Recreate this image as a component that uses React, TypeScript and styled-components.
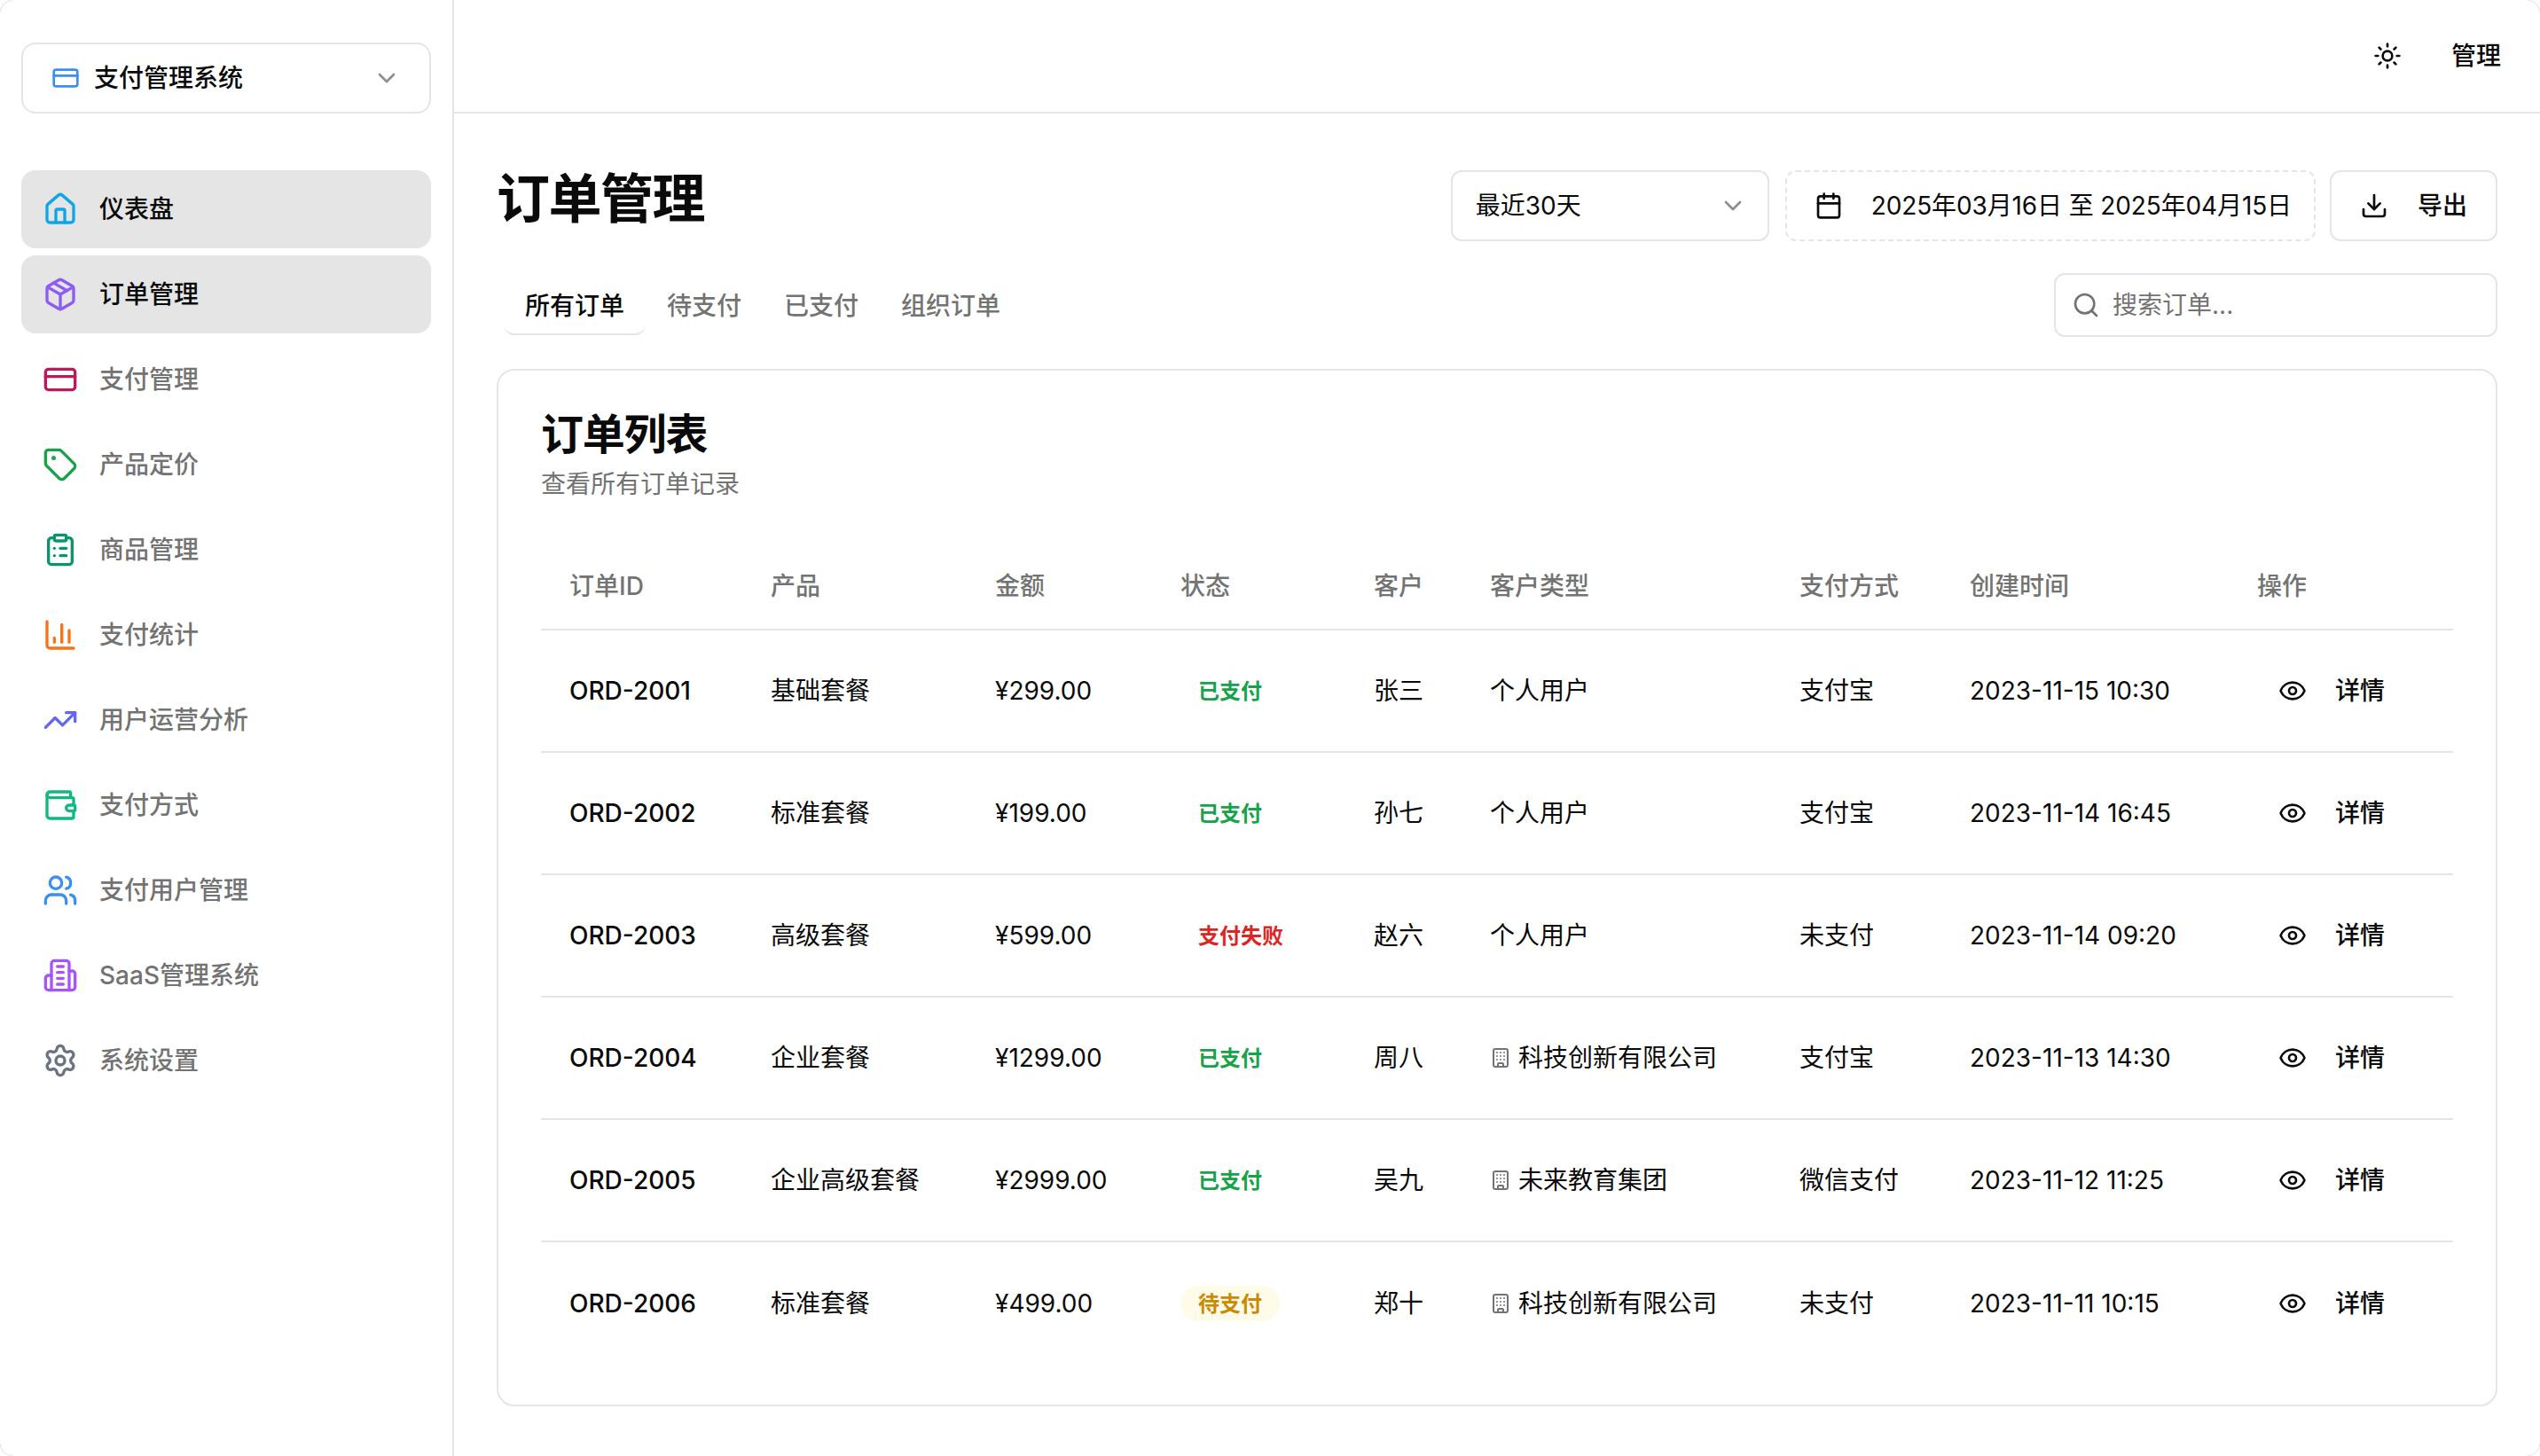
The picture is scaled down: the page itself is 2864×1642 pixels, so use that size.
import React from 'react';
import styled, { createGlobalStyle } from 'styled-components';
import {
  House,
  Package,
  CreditCard,
  Tag,
  ClipboardList,
  ChartColumn,
  TrendingUp,
  Wallet,
  Users,
  Settings,
  ChevronDown,
  Sun,
  Calendar,
  Download,
  Search,
  Eye,
  Building,
} from 'lucide-react';

const GlobalStyle = createGlobalStyle`
  * { box-sizing: border-box; }
  html, body {
    margin: 0;
    background: #fff;
    color: #0a0a0a;
    font-family: Inter, "Noto Sans CJK SC", sans-serif;
  }
`;

// old lucide building-2, the current package draws it differently
const Building2 = ({ size, color }: { size: number; color: string }) => (
  <svg width={size} height={size} viewBox="0 0 24 24" fill="none" stroke={color} strokeWidth="2" strokeLinecap="round" strokeLinejoin="round">
    <path d="M6 22V4a2 2 0 0 1 2-2h8a2 2 0 0 1 2 2v18Z" />
    <path d="M6 12H4a2 2 0 0 0-2 2v6a2 2 0 0 0 2 2h2" />
    <path d="M18 9h2a2 2 0 0 1 2 2v9a2 2 0 0 1-2 2h-2" />
    <path d="M10 6h4" />
    <path d="M10 10h4" />
    <path d="M10 14h4" />
    <path d="M10 18h4" />
  </svg>
);

const navItems = [
  { label: '仪表盘', Icon: House, color: '#0ea5e9', active: true },
  { label: '订单管理', Icon: Package, color: '#8b5cf6', active: true },
  { label: '支付管理', Icon: CreditCard, color: '#be185d' },
  { label: '产品定价', Icon: Tag, color: '#16a34a' },
  { label: '商品管理', Icon: ClipboardList, color: '#059669' },
  { label: '支付统计', Icon: ChartColumn, color: '#f97316' },
  { label: '用户运营分析', Icon: TrendingUp, color: '#6366f1' },
  { label: '支付方式', Icon: Wallet, color: '#10b981' },
  { label: '支付用户管理', Icon: Users, color: '#3b8ff0' },
  { label: 'SaaS管理系统', Icon: Building2, color: '#a855f7' },
  { label: '系统设置', Icon: Settings, color: '#6b7280' },
];

const tabs = ['所有订单', '待支付', '已支付', '组织订单'];

const columns = [
  { title: '订单ID', width: 227 },
  { title: '产品', width: 253 },
  { title: '金额', width: 209 },
  { title: '状态', width: 218 },
  { title: '客户', width: 131 },
  { title: '客户类型', width: 349 },
  { title: '支付方式', width: 192 },
  { title: '创建时间', width: 324 },
  { title: '操作', width: 253 },
];

type Tone = 'paid' | 'failed' | 'pending';

const orders: {
  id: string; product: string; amount: string; status: string; tone: Tone;
  customer: string; type: string; org?: boolean; pay: string; time: string;
}[] = [
  { id: 'ORD-2001', product: '基础套餐', amount: '¥299.00', status: '已支付', tone: 'paid', customer: '张三', type: '个人用户', pay: '支付宝', time: '2023-11-15 10:30' },
  { id: 'ORD-2002', product: '标准套餐', amount: '¥199.00', status: '已支付', tone: 'paid', customer: '孙七', type: '个人用户', pay: '支付宝', time: '2023-11-14 16:45' },
  { id: 'ORD-2003', product: '高级套餐', amount: '¥599.00', status: '支付失败', tone: 'failed', customer: '赵六', type: '个人用户', pay: '未支付', time: '2023-11-14 09:20' },
  { id: 'ORD-2004', product: '企业套餐', amount: '¥1299.00', status: '已支付', tone: 'paid', customer: '周八', type: '科技创新有限公司', org: true, pay: '支付宝', time: '2023-11-13 14:30' },
  { id: 'ORD-2005', product: '企业高级套餐', amount: '¥2999.00', status: '已支付', tone: 'paid', customer: '吴九', type: '未来教育集团', org: true, pay: '微信支付', time: '2023-11-12 11:25' },
  { id: 'ORD-2006', product: '标准套餐', amount: '¥499.00', status: '待支付', tone: 'pending', customer: '郑十', type: '科技创新有限公司', org: true, pay: '未支付', time: '2023-11-11 10:15' },
];

export default function App() {
  return (
    <Shell>
      <GlobalStyle />
      <Corner $y="top" $x="left" />
      <Corner $y="top" $x="right" />
      <Corner $y="bottom" $x="left" />
      <Corner $y="bottom" $x="right" />

      <Sidebar>
        <SystemSelect>
          <CreditCard size={32} color="#3b8ff0" />
          <SystemName>支付管理系统</SystemName>
          <MutedChevron size={32} />
        </SystemSelect>
        <Nav>
          {navItems.map(({ label, Icon, color, active }) => (
            <NavItem key={label} $active={active}>
              <Icon size={40} color={color} />
              <Label>{label}</Label>
            </NavItem>
          ))}
        </Nav>
      </Sidebar>

      <Main>
        <Topbar>
          <Sun size={32} />
          <TopLink>管理</TopLink>
        </Topbar>

        <Content>
          <TitleRow>
            <PageTitle>订单管理</PageTitle>
            <Controls>
              <RangeSelect>
                <Label>最近30天</Label>
                <MutedChevron size={32} />
              </RangeSelect>
              <DateRange>
                <Calendar size={32} />
                <DateText>2025年03月16日 至 2025年04月15日</DateText>
              </DateRange>
              <ExportButton>
                <Download size={32} />
                <Label>导出</Label>
              </ExportButton>
            </Controls>
          </TitleRow>

          <TabRow>
            <TabList>
              {tabs.map((t, i) => (
                <Tab key={t} $active={i === 0}>{t}</Tab>
              ))}
            </TabList>
            <SearchBox>
              <Search size={32} color="#737373" />
              <SearchInput placeholder="搜索订单..." />
            </SearchBox>
          </TabRow>

          <Card>
            <CardTitle>订单列表</CardTitle>
            <CardSub>查看所有订单记录</CardSub>
            <Table>
              <colgroup>
                {columns.map((c) => (
                  <col key={c.title} width={c.width} />
                ))}
              </colgroup>
              <thead>
                <tr>
                  {columns.map((c) => (
                    <Th key={c.title}>{c.title}</Th>
                  ))}
                </tr>
              </thead>
              <tbody>
                {orders.map((o) => (
                  <Row key={o.id}>
                    <Td $strong>{o.id}</Td>
                    <Td><Label>{o.product}</Label></Td>
                    <Td>{o.amount}</Td>
                    <Td><Badge $tone={o.tone}>{o.status}</Badge></Td>
                    <Td><Label>{o.customer}</Label></Td>
                    <Td>
                      <CustomerType>
                        {o.org && <Building size={24} color="#737373" />}
                        <Label>{o.type}</Label>
                      </CustomerType>
                    </Td>
                    <Td><Label>{o.pay}</Label></Td>
                    <Td>{o.time}</Td>
                    <Td>
                      <DetailButton>
                        <Eye size={32} />
                        <Label>详情</Label>
                      </DetailButton>
                    </Td>
                  </Row>
                ))}
              </tbody>
            </Table>
          </Card>
        </Content>
      </Main>
    </Shell>
  );
}

const Shell = styled.div`
  position: relative;
  display: flex;
  width: 100vw;
  height: 100vh;
  overflow: hidden;
  background: #fff;
`;

const Corner = styled.div<{ $x: 'left' | 'right'; $y: 'top' | 'bottom' }>`
  position: absolute;
  ${(p) => p.$x}: 0;
  ${(p) => p.$y}: 0;
  width: 14px;
  height: 14px;
  border-${(p) => p.$x}: 1px solid #e5e5e5;
  border-${(p) => p.$y}: 1px solid #e5e5e5;
  border-${(p) => p.$y}-${(p) => p.$x}-radius: 14px;
`;

// noto sits lower in the line than the original font, this lifts the text a bit
const Label = styled.span`
  display: block;
  padding-bottom: 4px;
`;

const Sidebar = styled.aside`
  flex: 0 0 512px;
  padding: 48px 24px 0;
  border-right: 2px solid #e5e5e5;
`;

const SystemSelect = styled.div`
  display: flex;
  align-items: center;
  gap: 16px;
  height: 80px;
  padding: 0 32px;
  margin-bottom: 64px;
  border: 2px solid #e5e5e5;
  border-radius: 16px;
`;

const SystemName = styled(Label)`
  flex: 1;
  font-size: 28px;
  font-weight: 500;
`;

const MutedChevron = styled(ChevronDown)`
  color: #737373;
  opacity: 0.8;
`;

const Nav = styled.nav`
  display: flex;
  flex-direction: column;
  gap: 8px;
`;

const NavItem = styled.div<{ $active?: boolean }>`
  display: flex;
  align-items: center;
  gap: 24px;
  height: 88px;
  padding: 0 24px;
  border-radius: 16px;
  font-size: 28px;
  font-weight: 500;
  color: ${(p) => (p.$active ? '#0a0a0a' : '#737373')};
  background: ${(p) => (p.$active ? '#e5e5e5' : 'transparent')};
`;

const Main = styled.main`
  flex: 1;
  min-width: 0;
`;

const Topbar = styled.header`
  display: flex;
  justify-content: flex-end;
  align-items: center;
  gap: 56px;
  height: 128px;
  padding-right: 44px;
  border-bottom: 2px solid #e5e5e5;
`;

const TopLink = styled(Label)`
  font-size: 28px;
  font-weight: 500;
`;

const Content = styled.div`
  padding: 64px 48px 48px;
`;

const TitleRow = styled.div`
  display: flex;
  justify-content: space-between;
  margin-bottom: 36px;
`;

const PageTitle = styled.h1`
  margin: 0;
  font-size: 60px;
  line-height: 64px;
  font-weight: 700;
  letter-spacing: -0.025em;
`;

const Controls = styled.div`
  display: flex;
  gap: 16px;
  font-size: 28px;
`;

const RangeSelect = styled.div`
  display: flex;
  align-items: center;
  justify-content: space-between;
  width: 359px;
  height: 80px;
  margin-right: 2px;
  padding: 0 23px 0 26px;
  border: 2px solid #e5e5e5;
  border-radius: 12px;
`;

const DateRange = styled.div`
  display: flex;
  align-items: center;
  gap: 32px;
  height: 80px;
  padding: 0 25px 0 31px;
  border: 2px dashed #e5e5e5;
  border-radius: 12px;
`;

const DateText = styled(Label)`
  letter-spacing: -0.12px;
`;

const ExportButton = styled.div`
  display: flex;
  align-items: center;
  gap: 33px;
  height: 80px;
  padding: 0 32px;
  border: 2px solid #e5e5e5;
  border-radius: 12px;
  font-weight: 500;
`;

const TabRow = styled.div`
  display: flex;
  justify-content: space-between;
  align-items: center;
  height: 72px;
  margin-bottom: 36px;
`;

const TabList = styled.div`
  display: flex;
  padding: 0 8px;
`;

const Tab = styled.div<{ $active?: boolean }>`
  display: flex;
  align-items: center;
  height: 68px;
  padding: 0 24px;
  font-size: 28px;
  font-weight: 500;
  border-radius: 12px;
  border-bottom: 2px solid ${(p) => (p.$active ? '#e5e5e5' : 'transparent')};
  color: ${(p) => (p.$active ? '#0a0a0a' : '#737373')};
`;

const SearchBox = styled.label`
  display: flex;
  align-items: center;
  gap: 14px;
  width: 500px;
  height: 72px;
  padding-left: 18px;
  border: 2px solid #e5e5e5;
  border-radius: 12px;
`;

const SearchInput = styled.input`
  flex: 1;
  min-width: 0;
  border: 0;
  outline: 0;
  padding: 0;
  background: transparent;
  font: inherit;
  font-size: 28px;
  &::placeholder { color: #737373; opacity: 1; }
`;

const Card = styled.section`
  height: 1170px;
  padding: 40px 48px 0;
  border: 2px solid #e5e5e5;
  border-radius: 20px;
`;

const CardTitle = styled.h2`
  margin: 0;
  font-size: 48px;
  line-height: 64px;
  font-weight: 700;
  letter-spacing: -0.025em;
`;

const CardSub = styled.p`
  margin: 4px 0 46px;
  font-size: 28px;
  line-height: 40px;
  color: #737373;
`;

const Table = styled.table`
  width: 2156px;
  table-layout: fixed;
  border-collapse: collapse;
  font-size: 28px;
`;

const Th = styled.th`
  height: 98px;
  padding: 0 32px 4px;
  text-align: left;
  font-weight: 500;
  color: #737373;
  border-bottom: 2px solid #e5e5e5;
`;

const Row = styled.tr`
  border-bottom: 2px solid #e5e5e5;
  &:last-child { border-bottom: 0; }
`;

const Td = styled.td<{ $strong?: boolean }>`
  height: 138px;
  padding: 0 32px;
  white-space: nowrap;
  font-weight: ${(p) => (p.$strong ? 500 : 400)};
`;

const toneColor: Record<Tone, string> = {
  paid: '#16a34a',
  failed: '#dc2626',
  pending: '#ca8a04',
};

const Badge = styled.span<{ $tone: Tone }>`
  display: inline-flex;
  align-items: center;
  vertical-align: middle;
  height: 40px;
  padding: 0 20px 3px;
  border-radius: 20px;
  font-size: 24px;
  font-weight: 600;
  color: ${(p) => toneColor[p.$tone]};
  background: ${(p) => (p.$tone === 'pending' ? '#fefce8' : 'transparent')};
`;

const CustomerType = styled.span`
  display: flex;
  align-items: center;
  gap: 8px;
`;

const DetailButton = styled.span`
  display: flex;
  align-items: center;
  gap: 32px;
  padding-left: 24px;
  font-weight: 500;
`;
